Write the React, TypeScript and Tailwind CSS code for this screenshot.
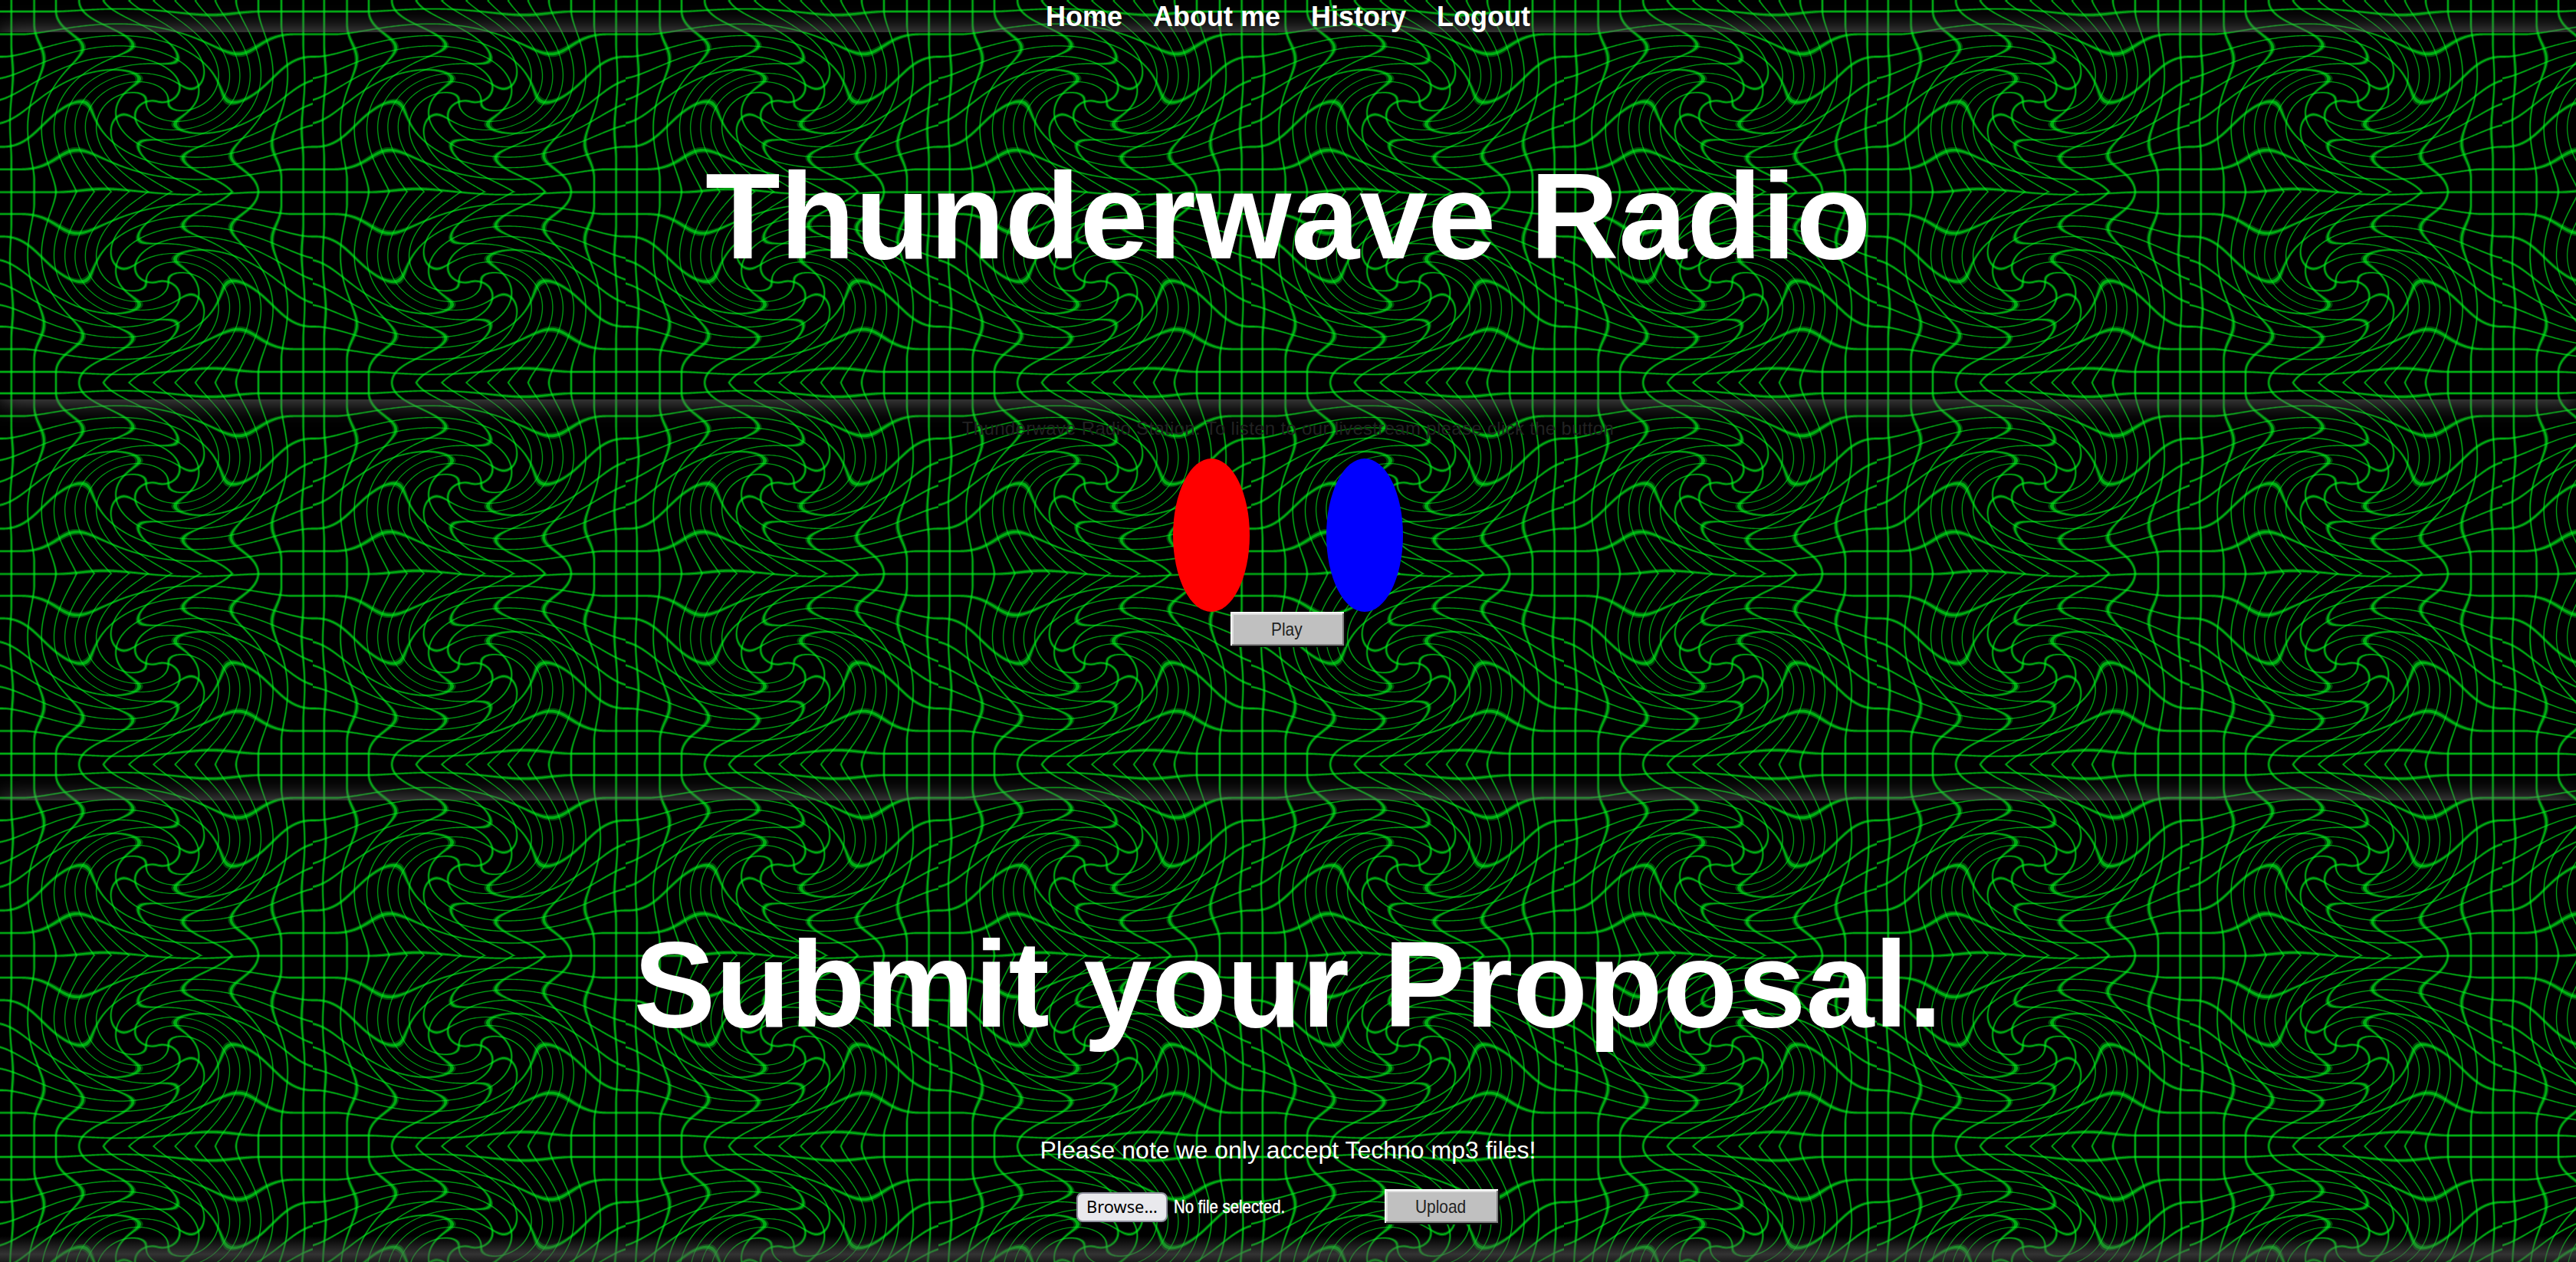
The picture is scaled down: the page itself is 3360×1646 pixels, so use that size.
import React from 'react';

const TILE_W = 408;
const TOP = 1;
const AXIS = 250.4;
const HALF_H = 249;
const RX = 219.6;
const RY = 148.7;
const CX = 205.3;
const CY = 132.4;
const TWIST = (204.5 * Math.PI) / 180;

function warp(x: number, y: number): [number, number] {
  const u = (x - CX) / RX;
  const v = (y - CY) / RY;
  const r = Math.hypot(u, v);
  if (r >= 1) return [x, y];
  const t = TWIST * (1 - r) * (1 - r);
  const c = Math.cos(t);
  const s = Math.sin(t);
  return [CX + RX * (u * c - v * s), CY + RY * (u * s + v * c)];
}

const fmt = (p: [number, number]) => p[0].toFixed(2) + ' ' + p[1].toFixed(2);

/* Outline of one grid line after the whirl: both of its edges are warped. */
function strip(pos: number, from: number, to: number, half: number, vertical: boolean) {
  const a: string[] = [];
  const b: string[] = [];
  for (let t = from; t <= to; t += 1) {
    a.push(fmt(vertical ? warp(pos - half, t) : warp(t, pos - half)));
    b.push(fmt(vertical ? warp(pos + half, t) : warp(t, pos + half)));
  }
  return 'M' + a.join('L') + 'L' + b.reverse().join('L') + 'Z';
}

const columns = [14.8, 44.6, 73, 103.2, 132.5, 161.5, 191, 220, 249.5, 279, 308, 337, 367, 395.6];
const rows = [15, 44.7, 74, 103.2, 132.4, 161.8, 191.5, 220.8];

const lines = (half: number) => [
  ...columns.map((x) => strip(x, -30, 300, half, true)),
  ...rows.map((y) => strip(y, -30, 440, half, false)),
];
const WIDE = 1.9;
const CORE = 0.9;
const wide = lines(WIDE);
const core = lines(CORE);

function Grid() {
  return (
    <svg className="absolute inset-0 h-full w-full" aria-hidden="true">
      <defs>
        <clipPath id="half">
          <rect y={TOP} width={TILE_W} height={AXIS - TOP} />
        </clipPath>
        <g id="swirl" clipPath="url(#half)">
          <rect y={TOP} width={TILE_W} height={AXIS - TOP} fill="#000" />
          <g fill="#00ff1c" fillOpacity="0.28">
            {wide.map((d, i) => (
              <path key={i} d={d} />
            ))}
          </g>
          <g fill="#00f01a" fillOpacity="0.6">
            {core.map((d, i) => (
              <path key={i} d={d} />
            ))}
          </g>
        </g>
        <pattern id="tile" y={TOP} width={TILE_W} height={HALF_H * 2} patternUnits="userSpaceOnUse">
          <g transform={`translate(0 ${-TOP})`}>
            <use href="#swirl" transform={`translate(0 ${HALF_H * 2 + TOP * 2}) scale(1 -1)`} />
            <use href="#swirl" />
            <path d={strip(250.7, -30, 440, WIDE, false)} fill="#00ff1c" fillOpacity="0.28" />
            <path d={strip(250.7, -30, 440, CORE, false)} fill="#00f01a" fillOpacity="0.6" />
          </g>
        </pattern>
      </defs>
      <rect width="100%" height="100%" fill="url(#tile)" />
    </svg>
  );
}

function RetroButton({ children }: { children: React.ReactNode }) {
  return (
    <button className="flex h-[46px] w-[150px] items-center justify-center bg-[#c0c0c0] pr-[3px] text-[24px] leading-none text-[#222] shadow-[inset_-2px_-2px_#0a0a0a,inset_2px_2px_#fff,inset_-4px_-4px_#808080,inset_4px_4px_#dfdfdf]">
      <span className="scale-x-[0.87]">{children}</span>
    </button>
  );
}

const links = ['Home', 'About me', 'History', 'Logout'];

export default function App() {
  return (
    <div className="relative flex h-[1646px] w-full flex-col overflow-hidden bg-black font-['Liberation_Sans',Arial,sans-serif] text-white">
      <Grid />
      <nav className="relative z-10 flex h-[42px] shrink-0 justify-center gap-10 pt-px text-[36px] leading-[42px] font-bold">
        {links.map((l) => (
          <a key={l} href="#">
            {l}
          </a>
        ))}
      </nav>
      <header className="relative flex h-[479px] shrink-0 justify-center pt-[110px] shadow-[0_0_30px_#666]">
        <h1 className="h-fit text-[160px] leading-[260px] font-bold whitespace-nowrap">Thunderwave Radio</h1>
      </header>
      <main className="relative flex h-[523px] shrink-0 flex-col items-center">
        <p className="mt-[16px] h-[61px] text-[24px] leading-[44px] tracking-[0.32px] whitespace-nowrap text-[#222]">
          Thunderwave Radio Station. To listen to our livestream please click the button
        </p>
        <div className="flex gap-[100px]">
          <div className="h-[200px] w-[100px] rounded-[50%] bg-[#f00]" />
          <div className="h-[200px] w-[100px] rounded-[50%] bg-[#00f]" />
        </div>
        <RetroButton>Play</RetroButton>
      </main>
      <section className="relative flex h-[591px] shrink-0 flex-col items-center">
        <div className="absolute inset-x-0 top-0 h-[591px] shadow-[0_0_30px_#666] [clip-path:inset(-60px_0_0_0)]" />
        <h2 className="mt-[110px] h-[260px] text-[160px] leading-[260px] font-bold whitespace-nowrap">Submit your Proposal.</h2>
        <p className="mt-[68px] text-[32px] leading-[36px]">Please note we only accept Techno mp3 files!</p>
        <form className="mt-[33px] flex h-[46px] w-[552px] items-center">
          <button className="h-[39px] w-[119px] rounded-[8px] border-2 border-[#8f8f9d] bg-[#e9e9ed] font-['Noto_Sans',sans-serif] text-[21.8px] leading-none text-black">
            Browse...
          </button>
          <span className="ml-[8px] w-[143px] origin-left scale-x-[0.85] text-[24px] whitespace-nowrap [-webkit-text-stroke:0.5px_#fff]">No file selected.</span>
          <div className="ml-auto">
            <RetroButton>Upload</RetroButton>
          </div>
        </form>
      </section>
      <div className="absolute inset-x-0 bottom-0 h-[34px] bg-linear-to-b from-[#444]/0 via-[#555]/60 via-70% to-[#444]/40" />
    </div>
  );
}
